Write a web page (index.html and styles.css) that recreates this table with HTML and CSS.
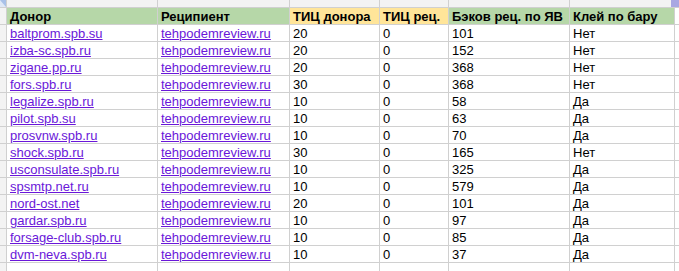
FILE: index.html
```html
<!DOCTYPE html>
<html>
<head>
<meta charset="utf-8">
<link rel="stylesheet" href="styles.css">
</head>
<body>
<div class="sheet">
  <div class="corner"><svg width="6" height="7" viewBox="0 0 6 7"><rect width="6" height="7" fill="#dfe8f6"/><path d="M0 0 L6 0 L6 7 Z" fill="#a9c1e8"/></svg></div>
  <div class="colhead"></div><div class="colhead"></div><div class="colhead"></div><div class="colhead"></div><div class="colhead"></div><div class="colhead"></div><div class="colhead"></div>

  <div class="rowhead"></div>
  <div class="h green">Донор</div>
  <div class="h green">Реципиент</div>
  <div class="h yellow">ТИЦ донора</div>
  <div class="h yellow">ТИЦ рец.</div>
  <div class="h green">Бэков рец. по ЯВ</div>
  <div class="h green">Клей по бару</div>
  <div class="c"></div>

  <div class="rowhead"></div><div class="c"><a href="#">baltprom.spb.su</a></div><div class="c"><a href="#">tehpodemreview.ru</a></div><div class="c">20</div><div class="c">0</div><div class="c">101</div><div class="c">Нет</div><div class="c"></div>
  <div class="rowhead"></div><div class="c"><a href="#">izba-sc.spb.ru</a></div><div class="c"><a href="#">tehpodemreview.ru</a></div><div class="c">20</div><div class="c">0</div><div class="c">152</div><div class="c">Нет</div><div class="c"></div>
  <div class="rowhead"></div><div class="c"><a href="#">zigane.pp.ru</a></div><div class="c"><a href="#">tehpodemreview.ru</a></div><div class="c">20</div><div class="c">0</div><div class="c">368</div><div class="c">Нет</div><div class="c"></div>
  <div class="rowhead"></div><div class="c"><a href="#">fors.spb.ru</a></div><div class="c"><a href="#">tehpodemreview.ru</a></div><div class="c">30</div><div class="c">0</div><div class="c">368</div><div class="c">Нет</div><div class="c"></div>
  <div class="rowhead"></div><div class="c"><a href="#">legalize.spb.ru</a></div><div class="c"><a href="#">tehpodemreview.ru</a></div><div class="c">10</div><div class="c">0</div><div class="c">58</div><div class="c">Да</div><div class="c"></div>
  <div class="rowhead"></div><div class="c"><a href="#">pilot.spb.su</a></div><div class="c"><a href="#">tehpodemreview.ru</a></div><div class="c">10</div><div class="c">0</div><div class="c">63</div><div class="c">Да</div><div class="c"></div>
  <div class="rowhead"></div><div class="c"><a href="#">prosvnw.spb.ru</a></div><div class="c"><a href="#">tehpodemreview.ru</a></div><div class="c">10</div><div class="c">0</div><div class="c">70</div><div class="c">Да</div><div class="c"></div>
  <div class="rowhead"></div><div class="c"><a href="#">shock.spb.ru</a></div><div class="c"><a href="#">tehpodemreview.ru</a></div><div class="c">30</div><div class="c">0</div><div class="c">165</div><div class="c">Нет</div><div class="c"></div>
  <div class="rowhead"></div><div class="c"><a href="#">usconsulate.spb.ru</a></div><div class="c"><a href="#">tehpodemreview.ru</a></div><div class="c">10</div><div class="c">0</div><div class="c">325</div><div class="c">Да</div><div class="c"></div>
  <div class="rowhead"></div><div class="c"><a href="#">spsmtp.net.ru</a></div><div class="c"><a href="#">tehpodemreview.ru</a></div><div class="c">10</div><div class="c">0</div><div class="c">579</div><div class="c">Да</div><div class="c"></div>
  <div class="rowhead"></div><div class="c"><a href="#">nord-ost.net</a></div><div class="c"><a href="#">tehpodemreview.ru</a></div><div class="c">20</div><div class="c">0</div><div class="c">101</div><div class="c">Да</div><div class="c"></div>
  <div class="rowhead"></div><div class="c"><a href="#">gardar.spb.ru</a></div><div class="c"><a href="#">tehpodemreview.ru</a></div><div class="c">10</div><div class="c">0</div><div class="c">97</div><div class="c">Да</div><div class="c"></div>
  <div class="rowhead"></div><div class="c"><a href="#">forsage-club.spb.ru</a></div><div class="c"><a href="#">tehpodemreview.ru</a></div><div class="c">10</div><div class="c">0</div><div class="c">85</div><div class="c">Да</div><div class="c"></div>
  <div class="rowhead"></div><div class="c"><a href="#">dvm-neva.spb.ru</a></div><div class="c"><a href="#">tehpodemreview.ru</a></div><div class="c">10</div><div class="c">0</div><div class="c">37</div><div class="c">Да</div><div class="c"></div>

  <div class="rowhead"></div><div class="c"></div><div class="c"></div><div class="c"></div><div class="c"></div><div class="c"></div><div class="c"></div><div class="c"></div>
  <div class="thumb"></div>
</div>
</body>
</html>
```

FILE: styles.css
```css
html, body {
  margin: 0;
  padding: 0;
  background: #fff;
  overflow: hidden;
}
.sheet {
  position: relative;
  width: 679px;
  height: 271px;
  display: grid;
  grid-template-columns: 6px 150px 131px 89px 68px 120px 104px 4px;
  grid-template-rows: 7px 16px repeat(14, 16px) 8px;
  gap: 1px;
  background: #d0d0d0;
  font-family: "Liberation Sans", Arial, sans-serif;
  font-size: 13px;
  color: #000;
  overflow: hidden;
}
.corner {
  background: #f3f3f3;
  line-height: 0;
}
.colhead {
  background: #f3f3f3;
}
.rowhead {
  background: #f3f3f3;
}
.c, .h {
  background: #fff;
  padding: 1px 3px 0;
  line-height: 15px;
  white-space: nowrap;
  overflow: hidden;
}
.h {
  font-weight: bold;
}
.green {
  background: #b6d7a8;
}
.yellow {
  background: #ffe599;
}
a {
  color: #6a17d9;
  text-decoration: underline;
}
.thumb {
  position: absolute;
  right: 0;
  top: 0;
  width: 8px;
  height: 7px;
  background: #a9a7e2;
}
```
